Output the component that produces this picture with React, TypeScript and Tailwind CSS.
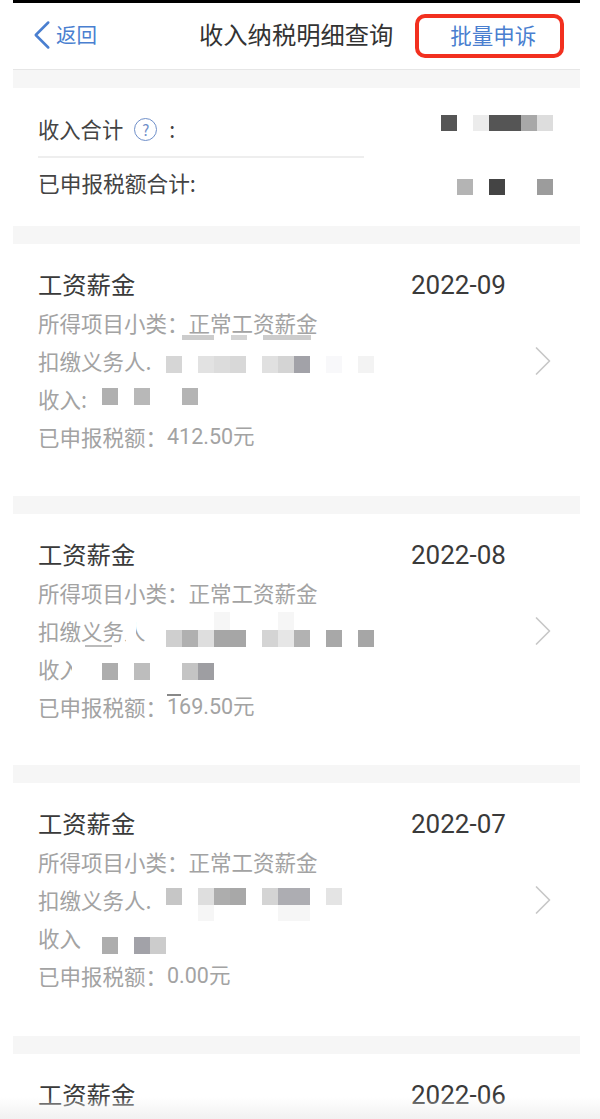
import { ChevronLeft, ChevronRight } from 'lucide-react';

const cjk = "font-['Noto_Sans_CJK_SC','Noto_Sans',sans-serif]";

function Mosaic({ cells, className = '' }: { cells: string[]; className?: string }) {
  return (
    <div className={`flex shrink-0 ${className}`}>
      {cells.map((c, i) => (
        <div key={i} className={`h-full w-4 ${c}`} />
      ))}
    </div>
  );
}

function Band() {
  return <div className="ml-[13px] mr-[20px] h-[18px] bg-[#f6f6f6]" />;
}

type Item = {
  month: string;
  tax: string;
  payerLabel: string;
  payer: string[];
  payerClass: string;
  incomeLabel: string;
  income: string[];
  incomeClass: string;
  height: string;
  // leftovers of the blur in the original picture
  marks: string[];
};

const items: Item[] = [
  {
    month: '2022-09',
    tax: '412.50元',
    payerLabel: '扣缴义务人.',
    payer: ['bg-[#d6d6d6]', '', 'bg-[#e2e2e2]', 'bg-[#dcdcdc]', 'bg-[#d8d8d8]', '', 'bg-[#e0e0e0]', 'bg-[#d4d4d4]', 'bg-[#a2a2a8]', '', 'bg-[#f8f8fa]', '', 'bg-[#f3f3f3]'],
    payerClass: 'mt-[5px]',
    incomeLabel: '收入:',
    income: ['bg-[#b0b0b0]', '', 'bg-[#b8b8b8]', '', '', 'bg-[#b4b4b4]'],
    incomeClass: '-mt-[7px]',
    height: 'h-[252px]',
    marks: [
      'left-[169px] top-[91px] h-[5px] w-8 bg-[#cccccc]',
      'left-[218px] top-[91px] h-[5px] w-4 bg-[#d4d4d4]',
      'left-[250px] top-[91px] h-[5px] w-12 bg-[#cccccc]',
    ],
  },
  {
    month: '2022-08',
    tax: '169.50元',
    payerLabel: '扣缴义务人',
    payer: ['bg-[#cfcfcf]', 'bg-[#b0b0b0]', 'bg-[#dedede]', 'bg-[#a6a6a6]', 'bg-[#a6a6a6]', '', 'bg-[#d4d4d4]', 'bg-[#e6e6e6]', 'bg-[#b2b2b2]', '', 'bg-[#a8a8a8]', '', 'bg-[#a6a6a6]'],
    payerClass: 'mt-[13px]',
    incomeLabel: '收入',
    income: ['bg-[#adadad]', '', 'bg-[#bdbdbd]', '', '', 'bg-[#c4c4c4]', 'bg-[#9e9ea2]'],
    incomeClass: 'mt-[3px]',
    height: 'h-[251px]',
    marks: [
      'left-[59px] top-[146px] h-[25px] w-[28px] bg-white',
      'left-[113px] top-[106px] h-[28px] w-[10px] bg-white',
      'left-[72px] top-[131px] h-[2px] w-[27px] bg-[#bbbbbb]',
      'left-[154px] top-[180px] h-[2px] w-[14px] bg-[#888888]',
      'left-[201px] top-[98px] h-[18px] w-4 bg-[#f6f6f6]',
      'left-[265px] top-[98px] h-[18px] w-4 bg-[#f6f6f6]',
    ],
  },
  {
    month: '2022-07',
    tax: '0.00元',
    payerLabel: '扣缴义务人.',
    payer: ['bg-[#c6c6c6]', '', 'bg-[#dedede]', 'bg-[#adadad]', 'bg-[#a8a8a8]', '', 'bg-[#d4d4d4]', 'bg-[#adadb2]', 'bg-[#adadb2]', '', 'bg-[#e4e4e4]'],
    payerClass: '-mt-[9px]',
    incomeLabel: '收入',
    income: ['bg-[#adadad]', '', 'bg-[#a2a2a8]', 'bg-[#cccccc]'],
    incomeClass: 'mt-[13px]',
    height: 'h-[253px]',
    marks: [
      'left-[185px] top-[122px] h-[16px] w-4 bg-[#f6f6f6]',
      'left-[265px] top-[122px] h-[16px] w-8 bg-[#f6f6f6]',
    ],
  },
];

function Title({ month }: { month: string }) {
  return (
    <div className="flex h-[38px] items-center">
      <div className="w-[373px] pb-[2px] text-[24.3px] leading-none text-[#3a3a3a]">工资薪金</div>
      <div className="font-['Roboto',sans-serif] text-[26px] leading-none text-[#3a3a3a]">{month}</div>
    </div>
  );
}

function Card({ item }: { item: Item }) {
  return (
    <section className={`relative ml-[13px] mr-[20px] pl-[25px] pt-[22px] ${item.height}`}>
      <Title month={item.month} />
      <div className="text-[21.5px] text-[#a3a3a3]">
        <div className="flex h-[40px] items-center pb-[2px]">所得项目小类：正常工资薪金</div>
        <div className="flex h-[36px] items-center">
          <div className="w-[128px] shrink-0 pb-[2px]">{item.payerLabel}</div>
          <Mosaic cells={item.payer} className={`h-[17px] ${item.payerClass}`} />
        </div>
        <div className="flex h-[40px] items-center">
          <div className="w-[64px] shrink-0 pb-[2px]">{item.incomeLabel}</div>
          <Mosaic cells={item.income} className={`h-[17px] ${item.incomeClass}`} />
        </div>
        <div className="flex h-[36px] items-center pb-[2px]">
          已申报税额：<span className="font-['Roboto','Noto_Sans_CJK_SC',sans-serif]">{item.tax}</span>
        </div>
      </div>
      {item.marks.map((m) => (
        <div key={m} className={`absolute ${m}`} />
      ))}
      <ChevronRight strokeWidth={0.8} className="absolute left-[504px] top-[91px] h-[52px] w-[52px] text-[#c8c8c8]" />
    </section>
  );
}

export default function App() {
  return (
    <div className={`relative h-[1119px] w-[600px] overflow-hidden bg-white ${cjk}`}>
      <div className="ml-[13px] mr-[20px] h-[3px] bg-black" />

      <header className="relative ml-[13px] mr-[20px] flex h-[67px] items-center border-b border-[#e6e6e6]">
        <div className="flex w-[186px] items-center pl-[5px] text-[20.5px] text-[#4a7fd0]">
          <ChevronLeft strokeWidth={1.2} className="mb-[2px] h-[50px] w-[50px] -translate-x-px" />
          <span className="-ml-[12px] mb-[3px]">返回</span>
        </div>
        <h1 className="mb-[3px] text-[24.3px] font-normal leading-none text-[#333333]">收入纳税明细查询</h1>
        <div className="ml-[22px] flex h-[44px] w-[149px] items-center justify-center rounded-[10px] border-4 border-[#f2301f] pb-[2px] pl-[7px] text-[21.5px] text-[#4a7fd0]">
          批量申诉
        </div>
      </header>

      <Band />

      <section className="ml-[13px] mr-[20px] h-[138px] px-[25px]">
        <div className="flex h-[68px] items-start justify-between pt-[27px]">
          <div className="flex h-[30px] items-center pb-[2px] text-[21.3px] text-[#444444]">
            收入合计
            <span className="ml-[11px] flex h-[23px] w-[23px] items-center justify-center rounded-full border border-[#6f8fc9] text-[15px] leading-none text-[#6f8fc9]">?</span>
            <span className="ml-[12px]">:</span>
          </div>
          <Mosaic cells={['bg-[#555555]', '', 'bg-[#ececec]', 'bg-[#555555]', 'bg-[#555555]', 'bg-[#a8a8a8]', 'bg-[#dddddd]']} className="mr-[2px] h-4" />
        </div>
        <div className="h-[2px] w-[326px] bg-[#eeeeee]" />
        <div className="flex h-[68px] items-start justify-between pt-[11px]">
          <div className="flex h-[30px] items-center pb-[2px] text-[21.7px] text-[#444444]">已申报税额合计:</div>
          <Mosaic cells={['bg-[#b4b4b4]', '', 'bg-[#444444]', '', '', 'bg-[#9c9c9c]']} className="mr-[2px] mt-[10px] h-4" />
        </div>
      </section>

      <Band />

      {items.map((item) => (
        <div key={item.month}>
          <Card item={item} />
          <Band />
        </div>
      ))}

      <section className="ml-[13px] mr-[20px] pl-[25px] pt-[22px]">
        <Title month="2022-06" />
      </section>

      <div className="absolute inset-x-0 bottom-0 h-[22px] bg-gradient-to-b from-transparent to-[#f1f1f1]" />
    </div>
  );
}
